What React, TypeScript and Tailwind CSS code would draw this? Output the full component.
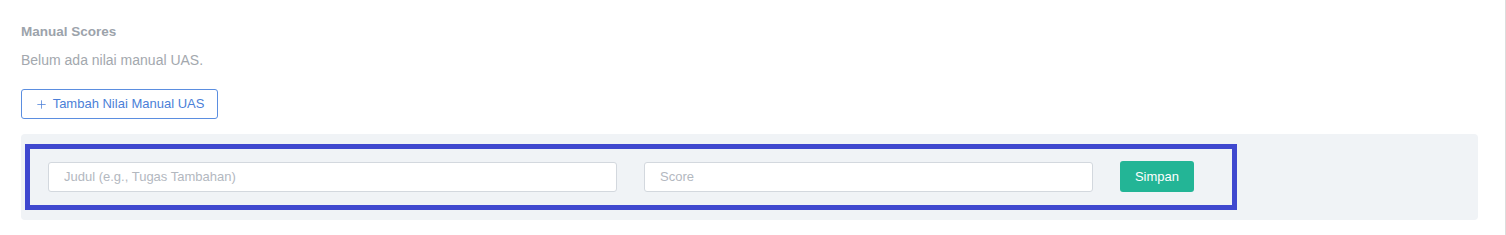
import { Plus } from "lucide-react";

export default function App() {
  return (
    <div className="w-[1506px] h-[235px] bg-white font-['Liberation_Sans',Arial,sans-serif]">
      <div className="w-[1506px] h-[235px] border-r border-[#dcdcdc] pl-[21px] pt-[21px]">
        <h3 className="text-[13.5px] leading-[21px] font-bold text-[#9ca3ab]">Manual Scores</h3>
        <p className="mt-[8px] text-[14px] leading-[20px] text-[#a3a8ae]">Belum ada nilai manual UAS.</p>

        <button className="mt-[19px] h-[30px] w-[197px] flex items-center justify-center gap-[5px] rounded-[3px] border border-[#5b8ee0] bg-white text-[13px] text-[#4b7fd8]">
          <Plus className="h-[13px] w-[13px]" strokeWidth={1.4} />
          Tambah Nilai Manual UAS
        </button>

        <div className="mt-[15px] w-[1457px] rounded-[4px] bg-[#f0f3f6] pl-[4px] py-[10px]">
          <div className="w-[1212px] border-[5px] border-[#3f48cf] pl-[18px] pt-[12px] pb-[13px] flex items-center gap-[27px]">
            <input
              placeholder="Judul (e.g., Tugas Tambahan)"
              className="h-[30px] w-[569px] rounded-[3px] border border-[#d3d8de] bg-white pl-[15px] text-[13px] text-gray-700 placeholder:text-[#b3b8bf] outline-none"
            />
            <input
              placeholder="Score"
              className="h-[30px] w-[449px] rounded-[3px] border border-[#d3d8de] bg-white pl-[15px] text-[13px] text-gray-700 placeholder:text-[#b3b8bf] outline-none"
            />
            <button className="h-[31px] w-[74px] rounded-[3px] bg-[#23b596] text-[13px] font-medium text-white">
              Simpan
            </button>
          </div>
        </div>
      </div>
    </div>
  );
}
